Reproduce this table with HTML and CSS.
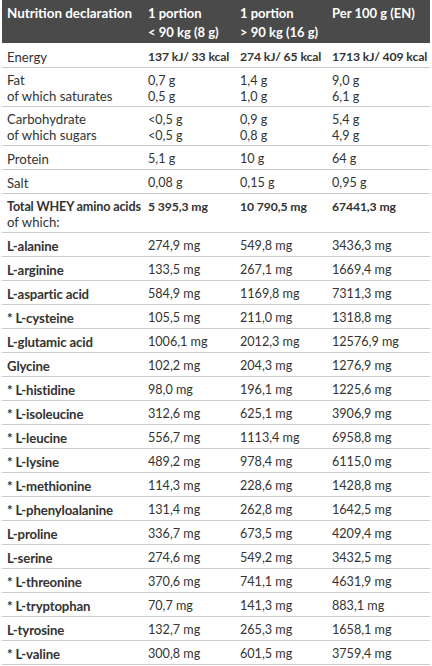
FILE: index.html
```html
<!DOCTYPE html>
<html lang="en">
<head>
<meta charset="utf-8">
<title>Nutrition declaration</title>
<link rel="stylesheet" href="styles.css">
</head>
<body>
<table class="nut">
  <colgroup>
    <col class="c1"><col class="c2"><col class="c3"><col class="c4">
  </colgroup>
  <thead>
    <tr>
      <th>Nutrition declaration</th>
      <th>1 portion<br>&lt; 90 kg (8 g)</th>
      <th>1 portion<br>&gt; 90 kg (16 g)</th>
      <th>Per 100 g (EN)</th>
    </tr>
  </thead>
  <tbody>
    <tr class="energy"><td>Energy</td><td class="b">137 kJ/ 33 kcal</td><td class="b">274 kJ/ 65 kcal</td><td class="b">1713 kJ/ 409 kcal</td></tr>
    <tr class="two"><td>Fat<br>of which saturates</td><td>0,7 g<br>0,5 g</td><td>1,4 g<br>1,0 g</td><td>9,0 g<br>6,1 g</td></tr>
    <tr class="two"><td>Carbohydrate<br>of which sugars</td><td>&lt;0,5 g<br>&lt;0,5 g</td><td>0,9 g<br>0,8 g</td><td>5,4 g<br>4,9 g</td></tr>
    <tr><td>Protein</td><td>5,1 g</td><td>10 g</td><td>64 g</td></tr>
    <tr><td>Salt</td><td>0,08 g</td><td>0,15 g</td><td>0,95 g</td></tr>
    <tr class="two"><td><b class="lb">Total WHEY amino acids</b><br>of which:</td><td class="b">5 395,3 mg</td><td class="b">10 790,5 mg</td><td class="b">67441,3 mg</td></tr>
    <tr><td class="lb">L-alanine</td><td>274,9 mg</td><td>549,8 mg</td><td>3436,3 mg</td></tr>
    <tr><td class="lb">L-arginine</td><td>133,5 mg</td><td>267,1 mg</td><td>1669,4 mg</td></tr>
    <tr><td class="lb">L-aspartic acid</td><td>584,9 mg</td><td>1169,8 mg</td><td>7311,3 mg</td></tr>
    <tr><td class="lb">* L-cysteine</td><td>105,5 mg</td><td>211,0 mg</td><td>1318,8 mg</td></tr>
    <tr><td class="lb">L-glutamic acid</td><td>1006,1 mg</td><td>2012,3 mg</td><td>12576,9 mg</td></tr>
    <tr><td class="lb">Glycine</td><td>102,2 mg</td><td>204,3 mg</td><td>1276,9 mg</td></tr>
    <tr><td class="lb">* L-histidine</td><td>98,0 mg</td><td>196,1 mg</td><td>1225,6 mg</td></tr>
    <tr><td class="lb">* L-isoleucine</td><td>312,6 mg</td><td>625,1 mg</td><td>3906,9 mg</td></tr>
    <tr><td class="lb">* L-leucine</td><td>556,7 mg</td><td>1113,4 mg</td><td>6958,8 mg</td></tr>
    <tr><td class="lb">* L-lysine</td><td>489,2 mg</td><td>978,4 mg</td><td>6115,0 mg</td></tr>
    <tr><td class="lb">* L-methionine</td><td>114,3 mg</td><td>228,6 mg</td><td>1428,8 mg</td></tr>
    <tr><td class="lb">* L-phenyloalanine</td><td>131,4 mg</td><td>262,8 mg</td><td>1642,5 mg</td></tr>
    <tr><td class="lb">L-proline</td><td>336,7 mg</td><td>673,5 mg</td><td>4209,4 mg</td></tr>
    <tr><td class="lb">L-serine</td><td>274,6 mg</td><td>549,2 mg</td><td>3432,5 mg</td></tr>
    <tr><td class="lb">* L-threonine</td><td>370,6 mg</td><td>741,1 mg</td><td>4631,9 mg</td></tr>
    <tr><td class="lb">* L-tryptophan</td><td>70,7 mg</td><td>141,3 mg</td><td>883,1 mg</td></tr>
    <tr><td class="lb">L-tyrosine</td><td>132,7 mg</td><td>265,3 mg</td><td>1658,1 mg</td></tr>
    <tr><td class="lb">* L-valine</td><td>300,8 mg</td><td>601,5 mg</td><td>3759,4 mg</td></tr>
  </tbody>
</table>
</body>
</html>
```
FILE: styles.css
```css
html, body {
  margin: 0;
  padding: 0;
  background: #ffffff;
}
body {
  padding: 0 2px;
  font-family: Lato, "Liberation Sans", sans-serif;
  color: #333333;
  font-size: 12.6px;
}
.nut {
  width: 428px;
  border-collapse: collapse;
  table-layout: fixed;
}
.c1 { width: 141px; }
.c2 { width: 92px; }
.c3 { width: 92px; }
.c4 { width: 103px; }
.nut th {
  background: #4a4a4a;
  color: #ffffff;
  font-weight: 700;
  font-size: 13px;
  line-height: 19px;
  text-align: left;
  vertical-align: top;
  padding: 4px 5px 1px;
  white-space: nowrap;
}
.nut th:first-child {
  font-size: 13.4px;
}
.nut td {
  text-align: left;
  vertical-align: top;
  line-height: 16px;
  padding: 5px 5px 2px;
  border-bottom: 1px solid #cccccc;
  white-space: nowrap;
}
.nut td:first-child {
  font-size: 13.2px;
}
.nut .energy td {
  padding-top: 6px;
}
.nut .two td {
  line-height: 15.5px;
}
.b {
  font-weight: 700;
  font-size: 12.2px;
  letter-spacing: -0.1px;
}
.lb {
  font-weight: 700;
  font-size: 12.6px;
  letter-spacing: -0.15px;
}
```
